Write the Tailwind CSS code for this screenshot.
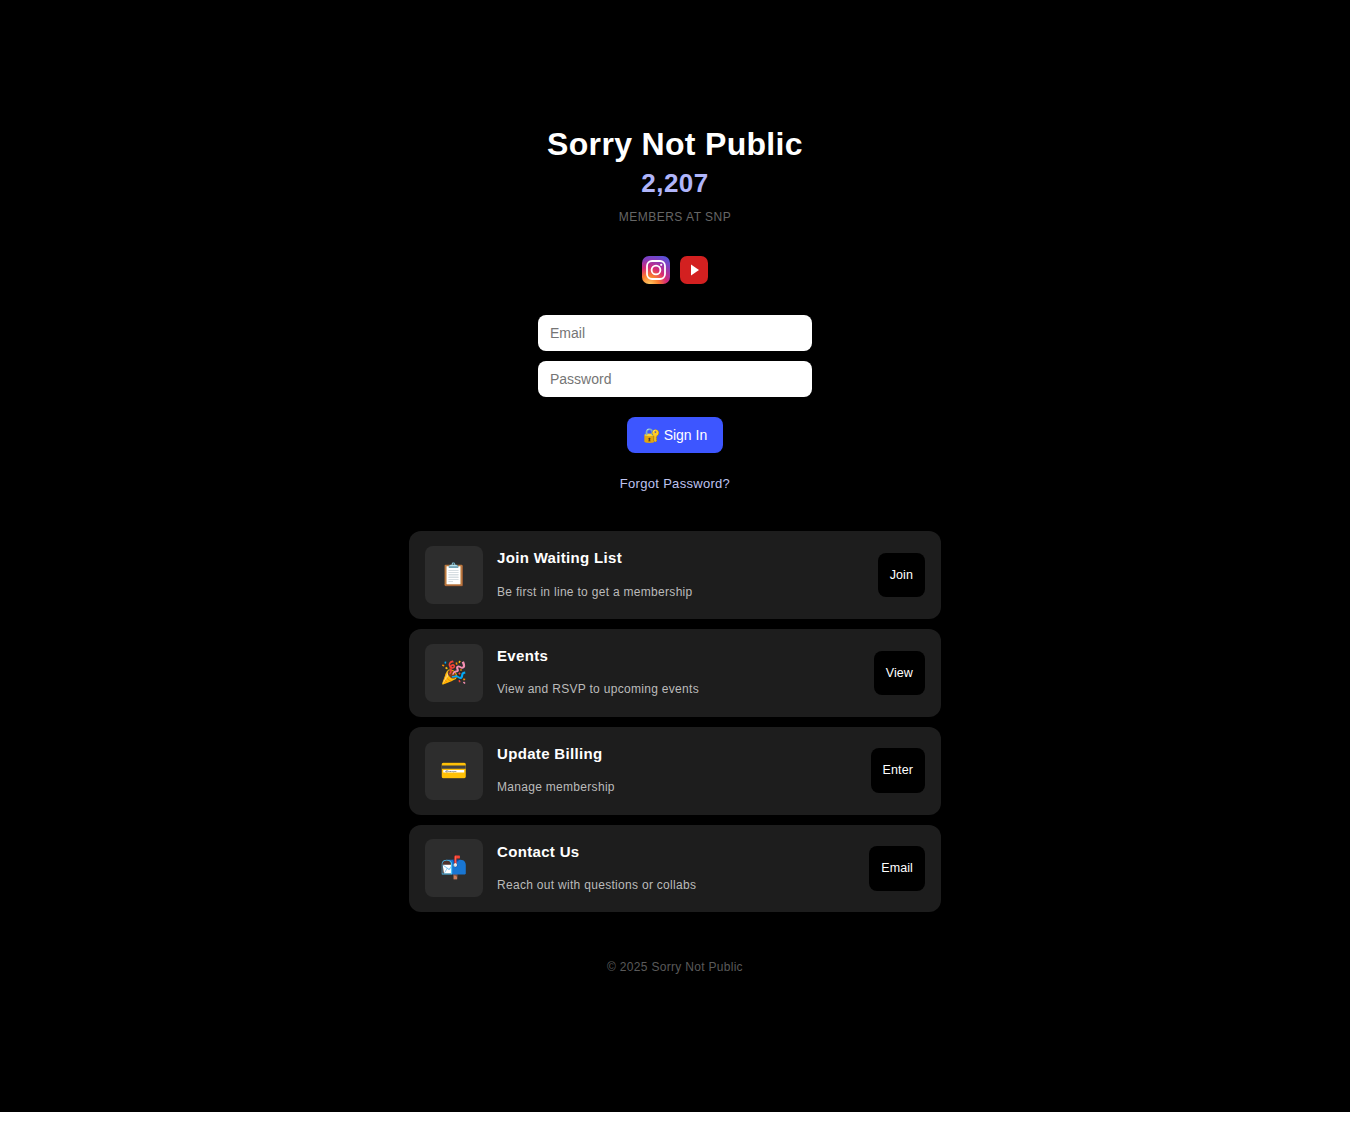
<!DOCTYPE html>
<html lang="en" class="bg-white">
<head>
    <meta charset="UTF-8">
    <meta name="viewport" content="width=device-width, initial-scale=1.0">
    <script src="https://cdn.jsdelivr.net/npm/@tailwindcss/browser@4"></script>
    <title>Sorry Not Public</title>
</head>
<body class="bg-white font-['Liberation_Sans',Arial,sans-serif]">
    <div class="h-[1112px] bg-black flex flex-col items-center pt-[126px] text-white">
        <h1 class="text-[32px] leading-[36px] font-bold tracking-[0.32px]">Sorry Not Public</h1>
        <div class="mt-[6px] text-[26px] leading-[30px] font-bold text-[#b0b5fa] tracking-[0.5px]">2,207</div>
        <div class="mt-[12px] text-[12px] leading-[14px] text-[#666] tracking-[0.5px]">MEMBERS AT SNP</div>

        <div class="mt-[32px] flex gap-[10px]">
            <a href="#" class="block w-[28px] h-[28px]">
                <svg width="28" height="28" viewBox="0 0 28 28">
                    <defs>
                        <radialGradient id="ig" cx="0.25" cy="1.05" r="1.15">
                            <stop offset="0" stop-color="#fed56a"/>
                            <stop offset="0.3" stop-color="#fa7e2e"/>
                            <stop offset="0.55" stop-color="#d62976"/>
                            <stop offset="0.8" stop-color="#8a3ab9"/>
                            <stop offset="1" stop-color="#5b51d8"/>
                        </radialGradient>
                    </defs>
                    <rect width="28" height="28" rx="7" fill="url(#ig)"/>
                    <rect x="5" y="5" width="18" height="18" rx="5" fill="none" stroke="#fff" stroke-width="1.8"/>
                    <circle cx="14" cy="14" r="4.4" fill="none" stroke="#fff" stroke-width="1.8"/>
                    <circle cx="19.2" cy="8.8" r="1.1" fill="#fff"/>
                </svg>
            </a>
            <a href="#" class="block w-[28px] h-[28px]">
                <svg width="28" height="28" viewBox="0 0 28 28">
                    <rect width="28" height="28" rx="7" fill="#d32020"/>
                    <path d="M11 8.5 L19 14 L11 19.5 Z" fill="#fff"/>
                </svg>
            </a>
        </div>

        <input type="email" placeholder="Email" class="mt-[31px] w-[274px] h-[36px] px-[12px] rounded-[8px] bg-white text-[14px] text-black placeholder:text-[#757575] outline-none">
        <input type="password" placeholder="Password" class="mt-[10px] w-[274px] h-[36px] px-[12px] rounded-[8px] bg-white text-[14px] text-black placeholder:text-[#757575] outline-none">

        <button type="button" class="mt-[20px] w-[96px] h-[36px] rounded-[8px] bg-[#3d56ff] text-[14px] text-white">🔐 Sign In</button>

        <a href="#" class="mt-[23px] text-[13px] leading-[16px] text-[#bfc3f0] tracking-[0.3px]">Forgot Password?</a>

        <div class="mt-[39px] w-[532px] flex flex-col gap-[10px]">
            <div class="h-[88px] rounded-[12px] bg-[#1d1d1d] pl-[16px] pr-[16px] flex items-center gap-[14px]">
                <div class="w-[58px] h-[58px] shrink-0 rounded-[8px] bg-[#2d2d2d] flex items-center justify-center pr-[2px] pb-[2px] text-[22px]">📋</div>
                <div class="flex-1 pb-[2px]">
                    <div class="text-[15px] leading-[18px] font-bold tracking-[0.33px]">Join Waiting List</div>
                    <div class="mt-[18px] text-[12px] leading-[14px] text-[#bbb] tracking-[0.3px]">Be first in line to get a membership</div>
                </div>
                <button type="button" class="h-[44px] px-[12px] rounded-[8px] bg-black text-[12.5px] tracking-[0.1px] text-white">Join</button>
            </div>
            <div class="h-[88px] rounded-[12px] bg-[#1d1d1d] pl-[16px] pr-[16px] flex items-center gap-[14px]">
                <div class="w-[58px] h-[58px] shrink-0 rounded-[8px] bg-[#2d2d2d] flex items-center justify-center pr-[2px] pb-[2px] text-[22px]">🎉</div>
                <div class="flex-1 pb-[4px]">
                    <div class="text-[15px] leading-[18px] font-bold tracking-[0.33px]">Events</div>
                    <div class="mt-[17px] text-[12px] leading-[14px] text-[#bbb] tracking-[0.3px]">View and RSVP to upcoming events</div>
                </div>
                <button type="button" class="h-[44px] px-[12px] rounded-[8px] bg-black text-[12.5px] tracking-[0.1px] text-white">View</button>
            </div>
            <div class="h-[88px] rounded-[12px] bg-[#1d1d1d] pl-[16px] pr-[16px] flex items-center gap-[14px]">
                <div class="w-[58px] h-[58px] shrink-0 rounded-[8px] bg-[#2d2d2d] flex items-center justify-center pr-[2px] pb-[2px] text-[22px]">💳</div>
                <div class="flex-1 pb-[4px]">
                    <div class="text-[15px] leading-[18px] font-bold tracking-[0.33px]">Update Billing</div>
                    <div class="mt-[17px] text-[12px] leading-[14px] text-[#bbb] tracking-[0.3px]">Manage membership</div>
                </div>
                <button type="button" class="h-[45px] mb-[1px] px-[12px] rounded-[8px] bg-black text-[12.5px] tracking-[0.1px] text-white">Enter</button>
            </div>
            <div class="h-[87px] rounded-[12px] bg-[#1d1d1d] pl-[16px] pr-[16px] flex items-center gap-[14px]">
                <div class="w-[58px] h-[58px] mb-[1px] shrink-0 rounded-[8px] bg-[#2d2d2d] flex items-center justify-center pr-[2px] pb-[2px] text-[22px]">📬</div>
                <div class="flex-1 pb-[2px]">
                    <div class="text-[15px] leading-[18px] font-bold tracking-[0.33px]">Contact Us</div>
                    <div class="mt-[17px] text-[12px] leading-[14px] text-[#bbb] tracking-[0.3px]">Reach out with questions or collabs</div>
                </div>
                <button type="button" class="h-[45px] px-[12px] rounded-[8px] bg-black text-[12.5px] tracking-[0.1px] text-white">Email</button>
            </div>
        </div>

        <div class="mt-[48px] text-[12px] leading-[14px] text-[#5a5a5a] tracking-[0.3px]">© 2025 Sorry Not Public</div>
    </div>
</body>
</html>
